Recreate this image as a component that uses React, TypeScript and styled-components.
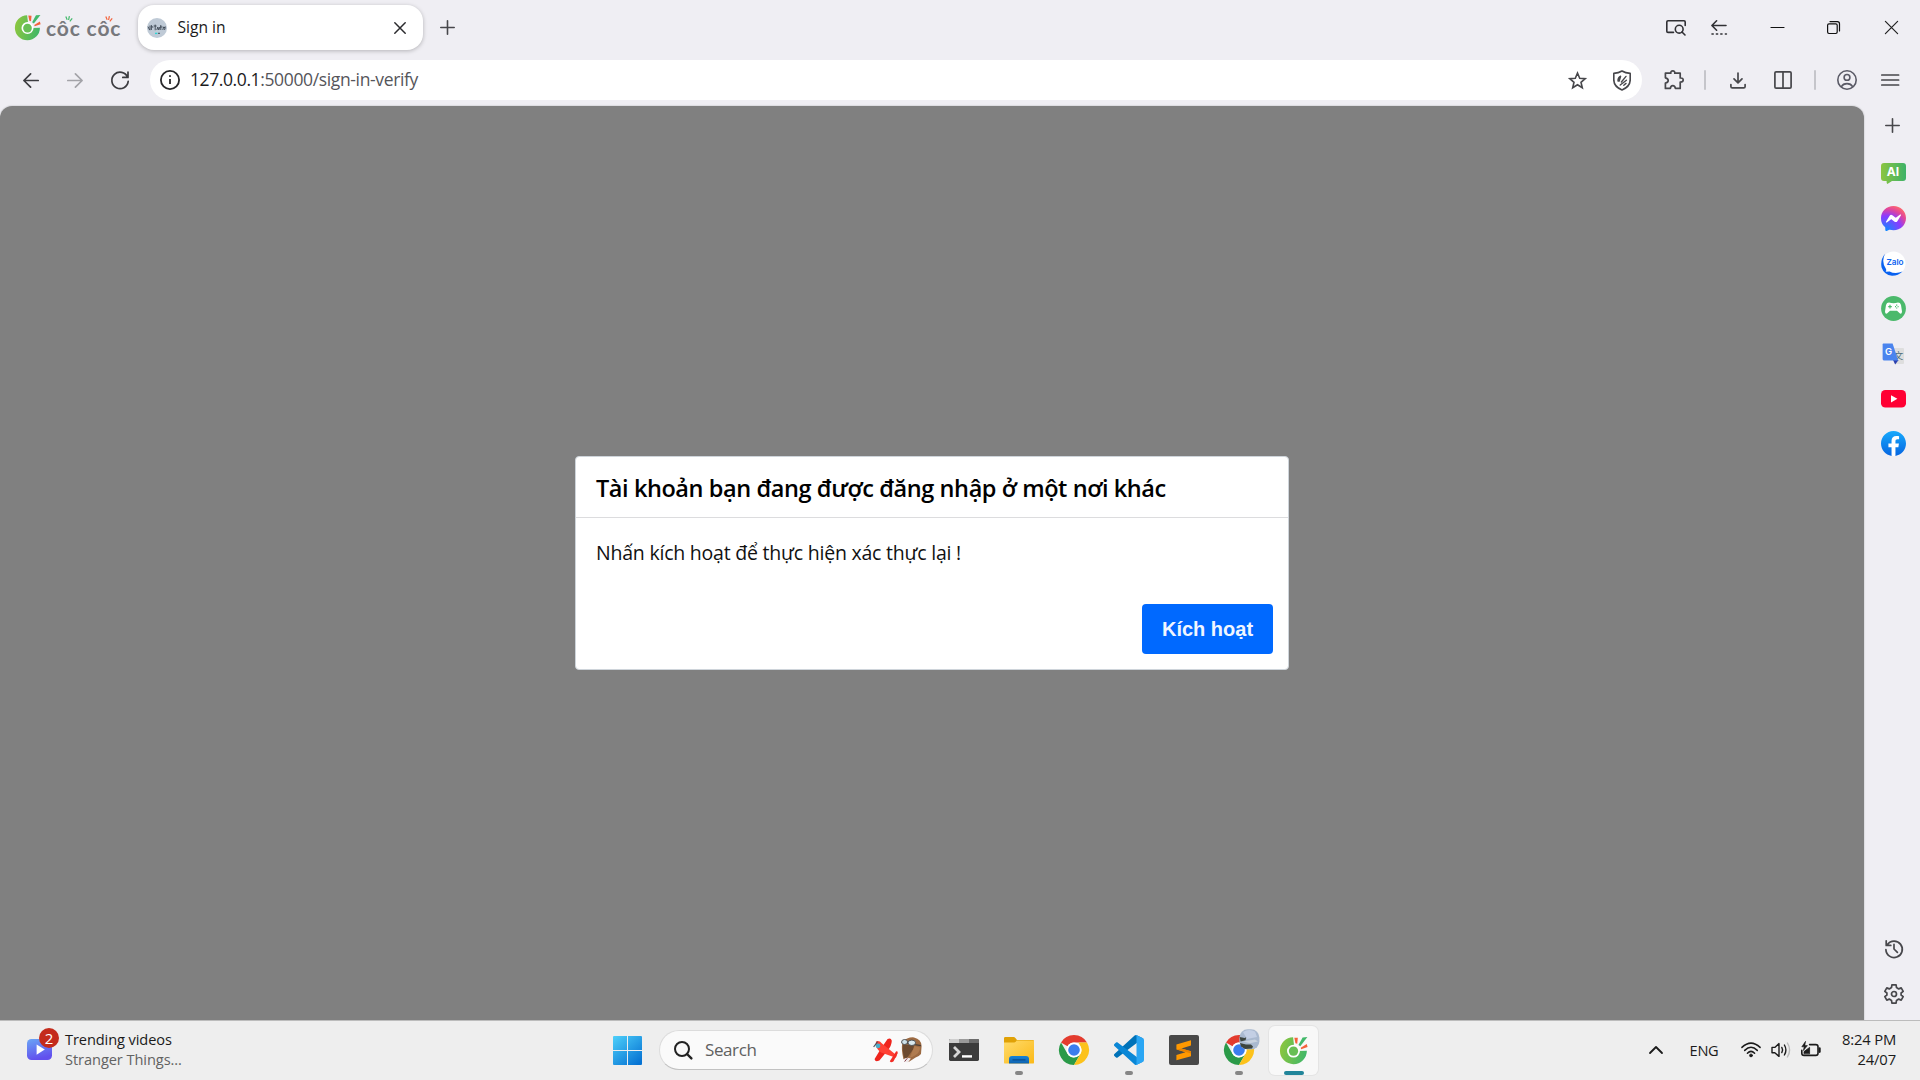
import React from "react";
import styled, { createGlobalStyle } from "styled-components";

const GlobalStyle = createGlobalStyle`
  * { box-sizing: border-box; }
  html, body { margin: 0; padding: 0; overflow: hidden; }
  body { font-family: "Open Sans", "Noto Sans", sans-serif; color: #1b1b1b; }
  svg { display: block; flex: none; overflow: visible; }
`;

const Screen = styled.div`
  width: 1920px;
  height: 1080px;
  display: flex;
  flex-direction: column;
  background: #efeef3;
`;

const Slot = styled.div<{ $w: number; $h?: number; $ml?: number }>`
  width: ${(p) => p.$w}px;
  height: ${(p) => (p.$h ? p.$h + "px" : "100%")};
  margin-left: ${(p) => p.$ml ?? 0}px;
  flex: none;
  display: flex;
  align-items: center;
  justify-content: center;
`;

const Text = styled.span<{ $size: number; $ls?: number; $color?: string; $weight?: number }>`
  font-size: ${(p) => p.$size}px;
  letter-spacing: ${(p) => p.$ls ?? 0}px;
  color: ${(p) => p.$color ?? "#1b1b1b"};
  font-weight: ${(p) => p.$weight ?? 400};
  line-height: 20px;
  white-space: pre;
`;

/* ---------- Tab strip ---------- */

const TabStrip = styled.header`
  height: 55px;
  flex: none;
  display: flex;
  align-items: flex-start;
`;

const Brand = styled.div`
  width: 138px;
  height: 55px;
  padding: 14px 0 0 14px;
  display: flex;
`;

const Wordmark = styled.div`
  position: relative;
  margin: 0 0 0 5px;
  font: 700 21px/28px Lato, sans-serif;
  color: #77787c;
  letter-spacing: 0.85px;
  white-space: pre;
`;

const Sparks = styled.svg<{ $x: number }>`
  position: absolute;
  left: ${(p) => p.$x}px;
  top: 1px;
`;

const Tab = styled.div`
  width: 285px;
  height: 45px;
  margin-top: 5px;
  padding: 0 17px 0 9px;
  display: flex;
  align-items: center;
  border-radius: 16px;
  background: #fff;
  box-shadow: 0 1px 4px rgba(0, 0, 0, 0.25);
`;

const TabTitle = styled.div`
  flex: 1;
  padding: 0 0 1px 10.5px;
  display: flex;
`;

const Spacer = styled.div`
  flex: 1;
`;

/* ---------- Toolbar ---------- */

const Toolbar = styled.div`
  height: 51px;
  flex: none;
  padding: 5px 0 6px 9px;
  display: flex;
  align-items: center;
`;

const Omnibox = styled.div`
  width: 1492px;
  height: 40px;
  margin-left: 7px;
  border-radius: 20px;
  background: #fff;
  display: flex;
  align-items: center;
`;

const Address = styled.div`
  padding-bottom: 2px;
  display: flex;
`;

const Divider = styled.i<{ $ml?: number }>`
  width: 2px;
  height: 20px;
  margin-left: ${(p) => p.$ml ?? 0}px;
  background: #c5c5ca;
  border-radius: 1px;
`;

/* ---------- Page and dialog ---------- */

const Main = styled.div`
  flex: 1;
  display: flex;
  min-height: 0;
`;

const Page = styled.main`
  width: 1864px;
  border-radius: 12px 12px 0 0;
  background: #808080;
  box-shadow: 0 0 1px 1px #dcdce0;
  display: flex;
  align-items: center;
  justify-content: center;
`;

const Dialog = styled.section`
  width: 714px;
  height: 214px;
  display: flex;
  flex-direction: column;
  background: #fff;
  border: 1px solid #ced4da;
  border-radius: 4px;
`;

const DialogTitle = styled.h1`
  height: 61px;
  margin: 0;
  padding: 2px 20px 0;
  display: flex;
  align-items: center;
  border-bottom: 1px solid #dcdcde;
  font-size: 23.5px;
  font-weight: 600;
  letter-spacing: -0.42px;
  line-height: 32px;
  color: #000;
  white-space: pre;
`;

const DialogBody = styled.p`
  margin: 0;
  padding: 20px 20px 0;
  font-size: 19.5px;
  letter-spacing: -0.22px;
  line-height: 30px;
  color: #111;
  white-space: pre;
`;

const DialogFooter = styled.footer`
  margin-top: auto;
  padding: 0 15px 15px;
  display: flex;
  justify-content: flex-end;
`;

const PrimaryButton = styled.button`
  width: 131px;
  height: 50px;
  border: 0;
  border-radius: 4px;
  padding: 0;
  background: #0069ff;
  color: #f0f6ff;
  font: 700 20px "Liberation Sans", Arial, sans-serif;
`;

/* ---------- Sidebar ---------- */

const Sidebar = styled.aside`
  width: 56px;
  padding: 0 0 4px 3px;
  display: flex;
  flex-direction: column;
  align-items: center;
`;

const AddApp = styled.div`
  width: 45px;
  height: 39px;
  padding-right: 2px;
  display: flex;
  align-items: center;
  justify-content: center;
`;

const SideApps = styled.div`
  margin-top: 6px;
`;

/* ---------- Taskbar ---------- */

const Taskbar = styled.footer`
  height: 60px;
  flex: none;
  padding-bottom: 1px;
  border-top: 1px solid #bcbcbc;
  background: #eeeeee;
  display: flex;
  align-items: center;
`;

const Widgets = styled.div`
  width: 600px;
  padding-left: 27px;
  display: flex;
  align-items: center;
`;

const WidgetIcon = styled.div`
  position: relative;
  width: 26px;
  margin-top: -2px;
`;

const Badge = styled.span`
  position: absolute;
  left: 12px;
  top: -11px;
  width: 20px;
  height: 20px;
  border-radius: 50%;
  background: #c42b1c;
  color: #fff;
  font-size: 15px;
  line-height: 20px;
  text-align: center;
`;

const Lines = styled.div<{ $align?: string; $ml?: number; $w?: number }>`
  display: flex;
  flex-direction: column;
  align-items: ${(p) => p.$align ?? "flex-start"};
  padding-bottom: 3px;
  margin-left: ${(p) => p.$ml ?? 0}px;
  width: ${(p) => (p.$w ? p.$w + "px" : "auto")};
`;

const SearchBox = styled.div`
  width: 274px;
  height: 40px;
  margin: 0 3px 0 4px;
  padding: 0 10px 0 14px;
  display: flex;
  align-items: center;
  background: #fafafa;
  border: 1px solid #dcdcdc;
  border-bottom-color: #c2c2c2;
  border-radius: 20px;
`;

const SearchLabel = styled.div`
  flex: 1;
  padding-left: 13px;
  display: flex;
`;

const SearchArt = styled.div`
  display: flex;
  align-items: center;
  gap: 3px;
`;

const AppTile = styled.div<{ $active?: boolean }>`
  position: relative;
  width: 49px;
  height: 49px;
  margin: 0 3px;
  display: flex;
  align-items: center;
  justify-content: center;
  border-radius: 6px;
  background: ${(p) => (p.$active ? "#f8f8f8" : "transparent")};
  box-shadow: ${(p) => (p.$active ? "0 0 0 1px #e4e4e4" : "none")};
`;

const Indicator = styled.i<{ $active?: boolean }>`
  position: absolute;
  bottom: 0;
  width: ${(p) => (p.$active ? 20 : 8)}px;
  height: 4px;
  border-radius: 2px;
  background: ${(p) => (p.$active ? "#22859a" : "#868686")};
`;

const Tray = styled.div`
  height: 100%;
  margin-left: auto;
  padding-right: 24px;
  display: flex;
  align-items: center;
`;

/* ---------- Drawings ---------- */

type LineProps = { w: number; h: number; c?: string; s?: number; children: React.ReactNode };
const Line = ({ w, h, c = "#47474b", s = 1.6, children }: LineProps) => (
  <svg width={w} height={h} viewBox={`0 0 ${w} ${h}`} fill="none" stroke={c} strokeWidth={s} strokeLinecap="round" strokeLinejoin="round">
    {children}
  </svg>
);

const CocCocMark = ({ size, id }: { size: number; id: string }) => (
  <svg width={size} height={size} viewBox="0 0 28 28">
    <defs>
      <linearGradient id={id} x1="0" x2="1" y1="0.4" y2="0.6">
        <stop offset="0" stopColor="#8cc63f" />
        <stop offset="1" stopColor="#3fb768" />
      </linearGradient>
    </defs>
    <path d="M13.6 1.2A13 13 0 1 0 26.9 14.2L19 14.6A5.2 5.2 0 1 1 14.6 9.3Z" fill={`url(#${id})`} />
    <circle cx="14" cy="14.6" r="5.4" fill="none" stroke="#fff" strokeWidth="1.7" />
    <circle cx="14" cy="14.6" r="4.5" fill="#68bf55" />
    <path d="M15.9 7L14.8 1.6 18.2 1.8 17.6 7.4Z" fill="#f4623a" />
    <path d="M18.8 8.6L22.8 1.4 27.4 1 20.6 9.8Z" fill="#42b96a" />
    <path d="M21 11.4L26.8 7.8 27.6 10.6 21.4 12.8Z" fill="#f4623a" />
  </svg>
);

const Ticks = ({ x, color }: { x: number; color: string }) => (
  <Sparks $x={x} width="8" height="8" viewBox="0 0 8 8" stroke={color} strokeWidth="1.2" fill="none">
    <path d="M2.2 4.8L.8 1.6M3.6 5L4.4 1.2M4.8 6.4L7.2 3.4" />
  </Sparks>
);

const Favicon = () => (
  <svg width="20" height="20" viewBox="0 0 20 20">
    <circle cx="10" cy="10" r="10" fill="#bfcad6" />
    <path d="M1 8.6l1.6 3.4M3 7.6v4.6M4.4 12V7.4l1.6 2.4M6.6 8h3M8.2 6.6v5.6M9.8 12l1-3 1 3 1-3M13.8 7v5M13 9h2.6M15.8 12l.8-3 1.8 1M18.2 8.4l-.6 3.6" stroke="#3a4450" strokeWidth="0.9" fill="none" />
    <path d="M8 15.4h2.4" stroke="#2fd6d6" strokeWidth="1.4" />
    <path d="M11 15.4h2" stroke="#56616e" strokeWidth="1.2" />
  </svg>
);

const Chrome = () => (
  <svg width="30" height="30" viewBox="0 0 48 48">
    <path d="M3.2 12A24 24 0 0 1 44.8 12L24 12A12 12 0 0 0 13.6 18Z" fill="#e33b2e" />
    <path d="M3.2 12L13.6 30A12 12 0 0 0 24 36L34.4 30 24 48A24 24 0 0 1 3.2 12Z" fill="#2a9a48" />
    <path d="M44.8 12A24 24 0 0 1 24 48L34.4 30A12 12 0 0 0 34.4 18L31 12Z" fill="#fcc21b" />
    <circle cx="24" cy="24" r="12" fill="#fff" />
    <circle cx="24" cy="24" r="9.3" fill="#3b7ded" />
  </svg>
);

const AvatarBadge = styled.svg`
  position: absolute;
  left: 25px;
  top: 3px;
`;

const VsCode = () => (
  <svg width="30" height="30" viewBox="0 0 100 100">
    <path fill="#0072b8" d="M96.4614 10.7962L75.8569 0.875542C73.4719 -0.272773 70.6217 0.211611 68.75 2.08333L1.29858 63.5832C-0.515693 65.2373 -0.513607 68.0937 1.30308 69.7452L6.81272 74.754C8.29793 76.1042 10.5347 76.2036 12.1338 74.9905L93.3609 13.3699C96.086 11.3026 100 13.2462 100 16.6667V16.4275C100 14.0265 98.6246 11.8378 96.4614 10.7962Z" />
    <path fill="#0a87d6" d="M96.4614 89.2038L75.8569 99.1245C73.4719 100.273 70.6217 99.7884 68.75 97.9167L1.29858 36.4169C-0.515693 34.7627 -0.513607 31.9063 1.30308 30.2548L6.81272 25.246C8.29793 23.8958 10.5347 23.7964 12.1338 25.0095L93.3609 86.6301C96.086 88.6974 100 86.7538 100 83.3333V83.5726C100 85.9735 98.6246 88.1622 96.4614 89.2038Z" />
    <path fill="#2aa6f4" d="M75.8578 99.1263C73.4721 100.274 70.6219 99.7885 68.75 97.9166C71.0564 100.223 75 98.5895 75 95.3278V4.67213C75 1.41039 71.0564 -0.223106 68.75 2.08329C70.6219 0.211402 73.4721 -0.273666 75.8578 0.873633L96.4587 10.7807C98.6234 11.8217 100 14.0112 100 16.4132V83.5871C100 85.9891 98.6234 88.1786 96.4586 89.2196L75.8578 99.1263Z" />
  </svg>
);

const Explorer = () => (
  <svg width="30" height="27" viewBox="0 0 30 27">
    <defs>
      <linearGradient id="folder" x1="0" x2="1" y1="0" y2="1">
        <stop offset="0" stopColor="#ffdb6b" />
        <stop offset="1" stopColor="#fbb917" />
      </linearGradient>
      <linearGradient id="folderBlue" x1="0" x2="0" y1="0" y2="1">
        <stop offset="0" stopColor="#1683d8" />
        <stop offset="1" stopColor="#0f62ae" />
      </linearGradient>
    </defs>
    <path d="M0 1.2Q0 0 1.2 0H9.6Q10.6 0 11.4.9L13 3H28.8Q30 3 30 4.2V12H0Z" fill="#e0a106" />
    <path d="M0 5.4H10.4Q11.4 5.4 12 4.6L12.6 3.6H30V25.4Q30 26.6 28.8 26.6H1.2Q0 26.6 0 25.4Z" fill="url(#folder)" />
    <path d="M5 26.6V22Q5 19 8 19H22Q25 19 25 22V26.6Z" fill="url(#folderBlue)" />
    <path d="M8.5 22.9H21.5" stroke="#0b4a8c" strokeWidth="1.2" />
  </svg>
);

const Terminal = () => (
  <svg width="30" height="22" viewBox="0 0 30 22">
    <rect width="30" height="22" rx="1.4" fill="#3c3c3c" />
    <path d="M0 4V1.4Q0 0 1.4 0H10V4Z" fill="#cfcfcf" />
    <path d="M10 0H20V4H10Z" fill="#9a9a9a" />
    <path d="M20 0H28.6Q30 0 30 1.4V4H20Z" fill="#6b6b6b" />
    <path d="M5 8L10 13 5 18" stroke="#d6d6d6" strokeWidth="2.8" fill="none" />
    <path d="M13 17.4H23" stroke="#fff" strokeWidth="2.4" />
  </svg>
);

const Sublime = () => (
  <svg width="30" height="30" viewBox="0 0 30 30">
    <rect width="30" height="30" rx="2" fill="#484848" />
    <path d="M22 5.2V10.4L12.4 13.4 22 16.3V21.2L7.4 25.2V20L16.4 17.2 7.4 14.4V9.6Z" fill="#ff9800" />
    <path d="M12.4 13.4L22 16.3V18.6L8 14.6Z" fill="#e88200" />
  </svg>
);

const WindowsLogo = () => (
  <svg width="29" height="29" viewBox="0 0 29 29">
    <defs>
      <linearGradient id="win" gradientUnits="userSpaceOnUse" x1="0" y1="0" x2="24" y2="29">
        <stop offset="0" stopColor="#4ed0fa" />
        <stop offset="1" stopColor="#0673d3" />
      </linearGradient>
    </defs>
    <path fill="url(#win)" d="M1 0H14V14H0V1Q0 0 1 0ZM15 0H28Q29 0 29 1V14H15ZM0 15H14V29H1Q0 29 0 28ZM15 15H29V28Q29 29 28 29H15Z" />
  </svg>
);

const Plane = () => (
  <svg width="25" height="25" viewBox="0 0 25 25">
    <path d="M14.6 1Q18-.6 18.8 2.8 18.6 8 14.6 12.6L6.4 22.4Q1.6 24.4 1.6 21L8 10.4Z" fill="#ee241d" />
    <path d="M3 3.6Q6 2 9 5.4L23.8 17.6 22.8 19.8 8 14.4Q1.4 10 3 3.6Z" fill="#ff4034" />
    <path d="M23 13.4Q25.4 13 24.6 15.4L20.4 23.4Q18 25 16.8 23.2Z" fill="#f22c25" />
    <circle cx="5" cy="7.8" r="2.4" fill="#47aecb" />
    <path d="M.6 9L4.6 3.6" stroke="#444d58" strokeWidth="1.1" />
  </svg>
);

const Helmet = () => (
  <svg width="21" height="26" viewBox="0 0 21 26">
    <path d="M1.4 5Q6 0 13 .4 20.4 2 20.6 9L20 17Q18 19.6 14.6 20.4L7.6 25 2.4 22Q0 12 1.4 5Z" fill="#9c6a42" />
    <path d="M2 7.4L13 8.6 12.4 12 6 21 3.4 21.4Q1 14 2 7.4Z" fill="#6b4a30" />
    <path d="M13.6 9L19 10.4Q19.2 16 12 19.4L8.6 21Z" fill="#b07c50" />
    <path d="M.6 5.4L20 8.6" stroke="#4a3f37" strokeWidth="1.1" />
    <ellipse cx="3.6" cy="5" rx="3" ry="2.5" fill="#cfe2ea" stroke="#46484c" strokeWidth=".9" />
    <ellipse cx="10.8" cy="5.8" rx="3.8" ry="2.7" fill="#d8e9f0" stroke="#46484c" strokeWidth=".9" />
    <path d="M2.4 22.4Q5 19.6 9.8 21.4L7 25.4 4 25Z" fill="#efe9ea" />
    <path d="M3.6 24.6L6.4 21.2" stroke="#8b4550" />
  </svg>
);

const AiIcon = () => (
  <svg width="25" height="21" viewBox="0 0 25 21">
    <defs>
      <linearGradient id="ai" x1="0" x2="1">
        <stop offset="0" stopColor="#8cc540" />
        <stop offset="1" stopColor="#3db268" />
      </linearGradient>
    </defs>
    <path d="M3 0H22Q25 0 25 3V15Q25 18 22 18H11L6.4 21Q5.4 21 5.6 18H3Q0 18 0 15V3Q0 0 3 0Z" fill="url(#ai)" />
    <text x="12" y="13" textAnchor="middle" fontFamily="Inter" fontWeight="700" fontSize="12" fill="#fff">AI</text>
  </svg>
);

const MessengerIcon = () => (
  <svg width="25" height="25" viewBox="0 0 24 24">
    <defs>
      <radialGradient id="msg" cx="0.2" cy="1" r="1.1">
        <stop offset="0" stopColor="#0a8bff" />
        <stop offset="0.55" stopColor="#8a3cff" />
        <stop offset="0.8" stopColor="#e0459c" />
        <stop offset="1" stopColor="#ff6a6a" />
      </radialGradient>
    </defs>
    <circle cx="12" cy="11.6" r="9" fill="#fff" />
    <path fill="url(#msg)" d="M.001 11.639C.001 4.949 5.241 0 12.001 0S24 4.95 24 11.639c0 6.689-5.24 11.638-12 11.638-1.21 0-2.38-.16-3.47-.46a.96.96 0 00-.64.05l-2.39 1.05a.96.96 0 01-1.35-.85l-.07-2.14a.97.97 0 00-.32-.68A11.39 11.389 0 01.002 11.64zm8.32-2.19l-3.52 5.6c-.35.53.32 1.139.82.75l3.79-2.87c.26-.2.6-.2.87 0l2.8 2.1c.84.63 2.04.4 2.6-.48l3.52-5.6c.35-.53-.32-1.13-.82-.75l-3.79 2.87c-.25.2-.6.2-.86 0l-2.8-2.1a1.8 1.8 0 00-2.61.48z" />
  </svg>
);

const ZaloIcon = () => (
  <svg width="25" height="25" viewBox="0 0 25 25">
    <circle cx="12.5" cy="12.5" r="12" fill="#fff" />
    <path d="M4 2.8Q-1 9 .6 16.4 3 23.6 11 24.8 17 25 21.6 20.6 14 23.4 8.6 20.4L4.6 20.8Q5.6 19.6 5 18 0 11 4 2.8Z" fill="#0a62f0" />
    <text x="14" y="14" textAnchor="middle" fontFamily="Inter" fontWeight="600" fontSize="8.2" fill="#0a62f0">Zalo</text>
  </svg>
);

const GameIcon = () => (
  <svg width="25" height="25" viewBox="0 0 25 25">
    <circle cx="12.5" cy="12.5" r="12.4" fill="#4bb96b" />
    <path d="M8 6.6Q12.5 8 17 6.6 19.4 6.6 20 9L21 15.4Q21 18 19 17.6L16 14.8H9L6 17.6Q4 18 4 15.4L5 9Q5.6 6.6 8 6.6Z" fill="#fff" />
    <path d="M7.2 10.6H10.8M9 8.8V12.4" stroke="#4bb96b" strokeWidth="1.2" />
    <path d="M15.7 8.6v1.2M15.7 11.4v1.2M14 10.6h1M16.6 10.6h1" stroke="#4bb96b" strokeWidth="1.2" />
  </svg>
);

const TranslateIcon = () => (
  <svg width="23" height="22" viewBox="0 0 23 22">
    <path d="M8 5H21Q22 5 22 6V20Q22 21 21 21H13Z" fill="#dedede" />
    <text x="16.6" y="15.6" textAnchor="middle" fontFamily="Noto Sans CJK SC" fontSize="9.5" fontWeight="400" fill="#4f6f7d">文</text>
    <path d="M11 17L16.6 17 13.2 21.6Z" fill="#2c3fae" />
    <path d="M1.4.4H10.6L16.2 17.6H2.4Q.6 17.6.6 16V1.4Q.6.4 1.4.4Z" fill="#4a84ee" />
    <text x="6.6" y="12.2" textAnchor="middle" fontFamily="Inter" fontSize="9.5" fontWeight="600" fill="#fff">G</text>
  </svg>
);

const YoutubeIcon = () => (
  <svg width="25" height="18" viewBox="0 0 25 18">
    <rect width="25" height="17.6" rx="4.4" fill="#ff0033" />
    <path d="M10 5.2L16.4 8.8 10 12.4Z" fill="#fff" />
  </svg>
);

const FacebookIcon = () => (
  <svg width="25" height="25" viewBox="0 0 24 24">
    <defs>
      <linearGradient id="fb" x1="0" x2="0" y1="0" y2="1">
        <stop offset="0" stopColor="#17a9fc" />
        <stop offset="1" stopColor="#0665e1" />
      </linearGradient>
    </defs>
    <path d="M6 4H18V23L12 24 9 23Z" fill="#fff" />
    <path fill="url(#fb)" d="M24 12.073c0-6.627-5.373-12-12-12s-12 5.373-12 12c0 5.99 4.388 10.954 10.125 11.854v-8.385H7.078v-3.47h3.047V9.43c0-3.007 1.792-4.669 4.533-4.669 1.312 0 2.686.235 2.686.235v2.953H15.83c-1.491 0-1.956.925-1.956 1.874v2.25h3.328l-.532 3.47h-2.796v8.385C19.612 23.027 24 18.062 24 12.073z" />
  </svg>
);

const PlusIcon = () => <Line w={15} h={15}><path d="M7.5.8v13.4M.8 7.5h13.4" /></Line>;

const GearIcon = () => (
  <Line w={20} h={20} s={1.7}>
    <path d="M7.9.9H12.1L12.5 3.6 14.7 4.9 17.2 3.9 19.2 7.4 17.1 9V11L19.2 12.6 17.2 16.1 14.7 15.1 12.5 16.4 12.1 19.1H7.9L7.5 16.4 5.3 15.1 2.8 16.1.8 12.6 2.9 11V9L.8 7.4 2.8 3.9 5.3 4.9 7.5 3.6Z" />
    <circle cx="10" cy="10" r="2.5" />
  </Line>
);

const sideApps = [AiIcon, MessengerIcon, ZaloIcon, GameIcon, TranslateIcon, YoutubeIcon, FacebookIcon];

export default function App() {
  return (
    <Screen>
      <GlobalStyle />
      <TabStrip>
        <Brand>
          <CocCocMark size={27} id="brandMark" />
          <Wordmark>
            côc côc
            <Ticks x={19} color="#42b96a" />
            <Ticks x={59} color="#f4623a" />
          </Wordmark>
        </Brand>
        <Tab>
          <Favicon />
          <TabTitle><Text $size={15.6}>Sign in</Text></TabTitle>
          <Line w={12} h={12} c="#2b2b2e" s={1.5}><path d="M.8.8l10.4 10.4M11.2.8L.8 11.2" /></Line>
        </Tab>
        <Slot $w={49}><PlusIcon /></Slot>
        <Spacer />
        <Slot $w={24}>
          <Line w={20} h={16} c="#303034">
            <path d="M7.5 12.4H2Q.8 12.4.8 11.2V2Q.8.8 2 .8H18Q19.2.8 19.2 2V5.5" />
            <circle cx="13.2" cy="9.2" r="3.9" />
            <path d="M16 12l3 3" />
          </Line>
        </Slot>
        <Slot $w={62}>
          <Line w={16} h={15} c="#303034">
            <path d="M15 5.5H1M5.6.8L.9 5.5l4.7 4.7" />
            <path d="M1 14h1.2M5.4 14h1.2M9.8 14h1.2M14.4 14h1" />
          </Line>
        </Slot>
        <Slot $w={55}><Line w={13} h={2} c="#111" s={1.2}><path d="M0 .5h13" /></Line></Slot>
        <Slot $w={57}>
          <Line w={13} h={13} c="#111" s={1.2}>
            <rect x=".6" y="2.9" width="9.6" height="9.6" rx="1.4" />
            <path d="M3 .6H10.4Q12.5.6 12.5 2.7V10" />
          </Line>
        </Slot>
        <Slot $w={58}><Line w={13} h={13} c="#222" s={1.2}><path d="M.4.4l12.2 12.2M12.6.4L.4 12.6" /></Line></Slot>
      </TabStrip>

      <Toolbar>
        <Slot $w={44}><Line w={16} h={15} c="#3c3c40" s={1.7}><path d="M15.2 7.5H1M7.6.9L.9 7.5l6.7 6.6" /></Line></Slot>
        <Slot $w={44}><Line w={16} h={15} c="#a3a3a8" s={1.7}><path d="M.8 7.5H15M8.4.9l6.7 6.6-6.7 6.6" /></Line></Slot>
        <Slot $w={46}>
          <Line w={18} h={18} c="#3c3c40" s={1.7}>
            <path d="M16.6 6.2A8.2 8.2 0 1 0 17.2 10.4M17 1v5.4h-5.2" />
          </Line>
        </Slot>
        <Omnibox>
          <Slot $w={40}>
            <Line w={20} h={20} c="#27272a" s={1.8}>
              <circle cx="10" cy="10" r="9.1" />
              <path d="M10 9v5" strokeLinecap="butt" />
              <path d="M10 6v.2" />
            </Line>
          </Slot>
          <Address>
            <Text $size={17.5} $ls={-0.4} $color="#1b1b1d">127.0.0.1</Text>
            <Text $size={17.5} $ls={-0.36} $color="#55555a">:50000/sign-in-verify</Text>
          </Address>
          <Spacer />
          <Slot $w={49}>
            <Line w={17} h={17} s={1.6}>
              <path d="M8.5 1L10.7 6.2 16.2 6.6 12 10.3 13.3 15.8 8.5 12.8 3.7 15.8 5 10.3.8 6.6 6.3 6.2Z" strokeLinejoin="miter" />
            </Line>
          </Slot>
          <Slot $w={40}>
            <Line w={18} h={21} s={1.6}>
              <path d="M9 1Q12.4 3.2 17.2 3.4V10.4Q16.8 16.8 9 20 1.2 16.8.8 10.4V3.4Q5.6 3.2 9 1Z" />
              <path d="M5 11Q4.8 7.6 7.6 6.2L6.2 11ZM8.4 12L13 6.4M7.2 15L13.4 10.2M10.8 15.2L13 13.4" fill="#47474b" strokeWidth="1.4" />
            </Line>
          </Slot>
        </Omnibox>
        <Slot $w={60} $ml={2}>
          <Line w={20} h={20} s={1.7}>
            <path d="M2 3.2H6.8Q6.6.9 8.8.9T10.8 3.2H16.2V8Q19.2 7.8 19.2 10T16.2 12.2V18.4H11.4Q11 15.6 8.8 15.6T6.4 18.4H1.4V13Q4.2 12.4 4.2 10.4T1.4 7.8V3.2Z" />
          </Line>
        </Slot>
        <Divider />
        <Slot $w={64}><Line w={16} h={17} s={1.7}><path d="M8 1v9.4M4 6.8l4 4 4-4M.9 12.6v1.8q0 1.4 1.4 1.4h11.4q1.4 0 1.4-1.4v-1.8" /></Line></Slot>
        <Slot $w={26}><Line w={18} h={18} s={1.7}><rect x=".9" y=".9" width="16.2" height="16.2" rx="1.2" /><path d="M9 1v16" /></Line></Slot>
        <Divider $ml={18} />
        <Slot $w={62}>
          <Line w={20} h={20} c="#5a5a66" s={1.6}>
            <circle cx="10" cy="10" r="9.2" />
            <circle cx="10" cy="7.4" r="2.9" />
            <path d="M4.4 16.6Q6 13.6 10 13.6t5.6 3" />
          </Line>
        </Slot>
        <Slot $w={24}><Line w={18} h={12} s={1.7}><path d="M.8 1h16.8M.8 6h16.8M.8 11h16.8" /></Line></Slot>
      </Toolbar>

      <Main>
        <Page>
          <Dialog>
            <DialogTitle>Tài khoản bạn đang được đăng nhập ở một nơi khác</DialogTitle>
            <DialogBody>Nhấn kích hoạt để thực hiện xác thực lại !</DialogBody>
            <DialogFooter><PrimaryButton>Kích hoạt</PrimaryButton></DialogFooter>
          </Dialog>
        </Page>
        <Sidebar>
          <AddApp><PlusIcon /></AddApp>
          <SideApps>
            {sideApps.map((Icon, i) => <Slot key={i} $w={45} $h={45}><Icon /></Slot>)}
          </SideApps>
          <Spacer />
          <Slot $w={45} $h={45}>
            <Line w={18} h={18} s={1.7}>
              <path d="M2.4 4.6A8.2 8.2 0 1 1 .9 9.6M1.2.8v4.6h4.6M9 4.4V9l3.4 3.4" />
            </Line>
          </Slot>
          <Slot $w={45} $h={45}><GearIcon /></Slot>
        </Sidebar>
      </Main>

      <Taskbar>
        <Widgets>
          <WidgetIcon>
            <svg width="25" height="21" viewBox="0 0 25 21">
              <defs>
                <linearGradient id="video" x1="0" x2="0.3" y1="0" y2="1">
                  <stop offset="0" stopColor="#6aa5f5" />
                  <stop offset="1" stopColor="#6250ee" />
                </linearGradient>
              </defs>
              <rect width="25" height="21" rx="4.5" fill="url(#video)" />
              <path d="M9.6 5.4L17.8 10.6 9.6 15.8Z" fill="#fff" />
            </svg>
            <Badge>2</Badge>
          </WidgetIcon>
          <Lines $ml={12}>
            <Text $size={14.6} $ls={-0.1}>Trending videos</Text>
            <Text $size={14.6} $ls={-0.07} $color="#626262">Stranger Things...</Text>
          </Lines>
        </Widgets>
        <Slot $w={55}><WindowsLogo /></Slot>
        <SearchBox>
          <Line w={18} h={18} c="#222" s={2}><circle cx="8" cy="8" r="7" /><path d="M13 13l4.4 4.4" strokeWidth="2.4" /></Line>
          <SearchLabel><Text $size={17} $ls={-0.4} $color="#606060">Search</Text></SearchLabel>
          <SearchArt><Plane /><Helmet /></SearchArt>
        </SearchBox>
        <AppTile><Terminal /></AppTile>
        <AppTile><Explorer /><Indicator /></AppTile>
        <AppTile><Chrome /></AppTile>
        <AppTile><VsCode /><Indicator /></AppTile>
        <AppTile><Sublime /></AppTile>
        <AppTile>
          <Chrome />
          <AvatarBadge width="21" height="21" viewBox="0 0 21 21">
            <rect x=".4" y=".2" width="20" height="20.4" rx="8.4" fill="#a9b9cf" />
            <path d="M4 3Q10-.6 16 2.6L18 8 8 10Z" fill="#c3cfe4" />
            <path d="M.6 8l5 1 1.6-.8-.6 3-5 1.2zM1 14l6 1.4 5 .2 2 2-1 2-7 .4-4-2.6z" fill="#3d453f" />
            <path d="M4 12.6l12-2 3 2-8 1.6z" fill="#c9d3df" />
          </AvatarBadge>
          <Indicator />
        </AppTile>
        <AppTile $active><CocCocMark size={29} id="taskMark" /><Indicator $active /></AppTile>
        <Tray>
          <Slot $w={42}><Line w={14} h={8} c="#1b1b1b" s={1.8}><path d="M1 7l6-6 6 6" /></Line></Slot>
          <Slot $w={54}><Text $size={14.6} $ls={-0.3}>ENG</Text></Slot>
          <Slot $w={40}>
            <Line w={20} h={16} c="#1b1b1b" s={1.5}>
              <path d="M.9 5.4Q10-3.2 19.1 5.4M3.7 8.4Q10 2.2 16.3 8.4M6.4 11.2Q10 7.6 13.6 11.2" />
              <circle cx="10" cy="13.4" r="1.5" fill="#1b1b1b" strokeWidth=".6" />
            </Line>
          </Slot>
          <Slot $w={20}>
            <Line w={20} h={16} c="#1b1b1b" s={1.4}>
              <path d="M1 5.4h2.8L8 1.6v12.8L3.8 10.8H1Z" />
              <path d="M10.8 5.4q1.6 2.6 0 5.2M13.4 3q3 5 0 10" />
              <path d="M16.4 1q4.4 7 0 14" stroke="#bdbdbd" />
            </Line>
          </Slot>
          <Slot $w={40}>
            <Line w={20} h={16} c="#1b1b1b" s={1.6}>
              <path d="M8.6 2.6h6.2q2.2 0 2.2 2.2v6.4q0 2.2-2.2 2.2H3q-2.2 0-2.2-2.2V8.4" />
              <path d="M18.6 6.4v3.4" strokeWidth="2.2" />
              <path d="M3 11.4V9.6L8.6 5.4v6Z" fill="#1b1b1b" strokeWidth=".8" />
              <path d="M4.4-.4L.8 4.8h2.4L2.4 8.6l4-5H4Z" fill="#1b1b1b" strokeWidth=".6" />
            </Line>
          </Slot>
          <Lines $align="flex-end" $w={65}>
            <Text $size={14.8} $ls={-0.2}>8:24 PM</Text>
            <Text $size={14.8} $ls={-0.15}>24/07</Text>
          </Lines>
        </Tray>
      </Taskbar>
    </Screen>
  );
}
